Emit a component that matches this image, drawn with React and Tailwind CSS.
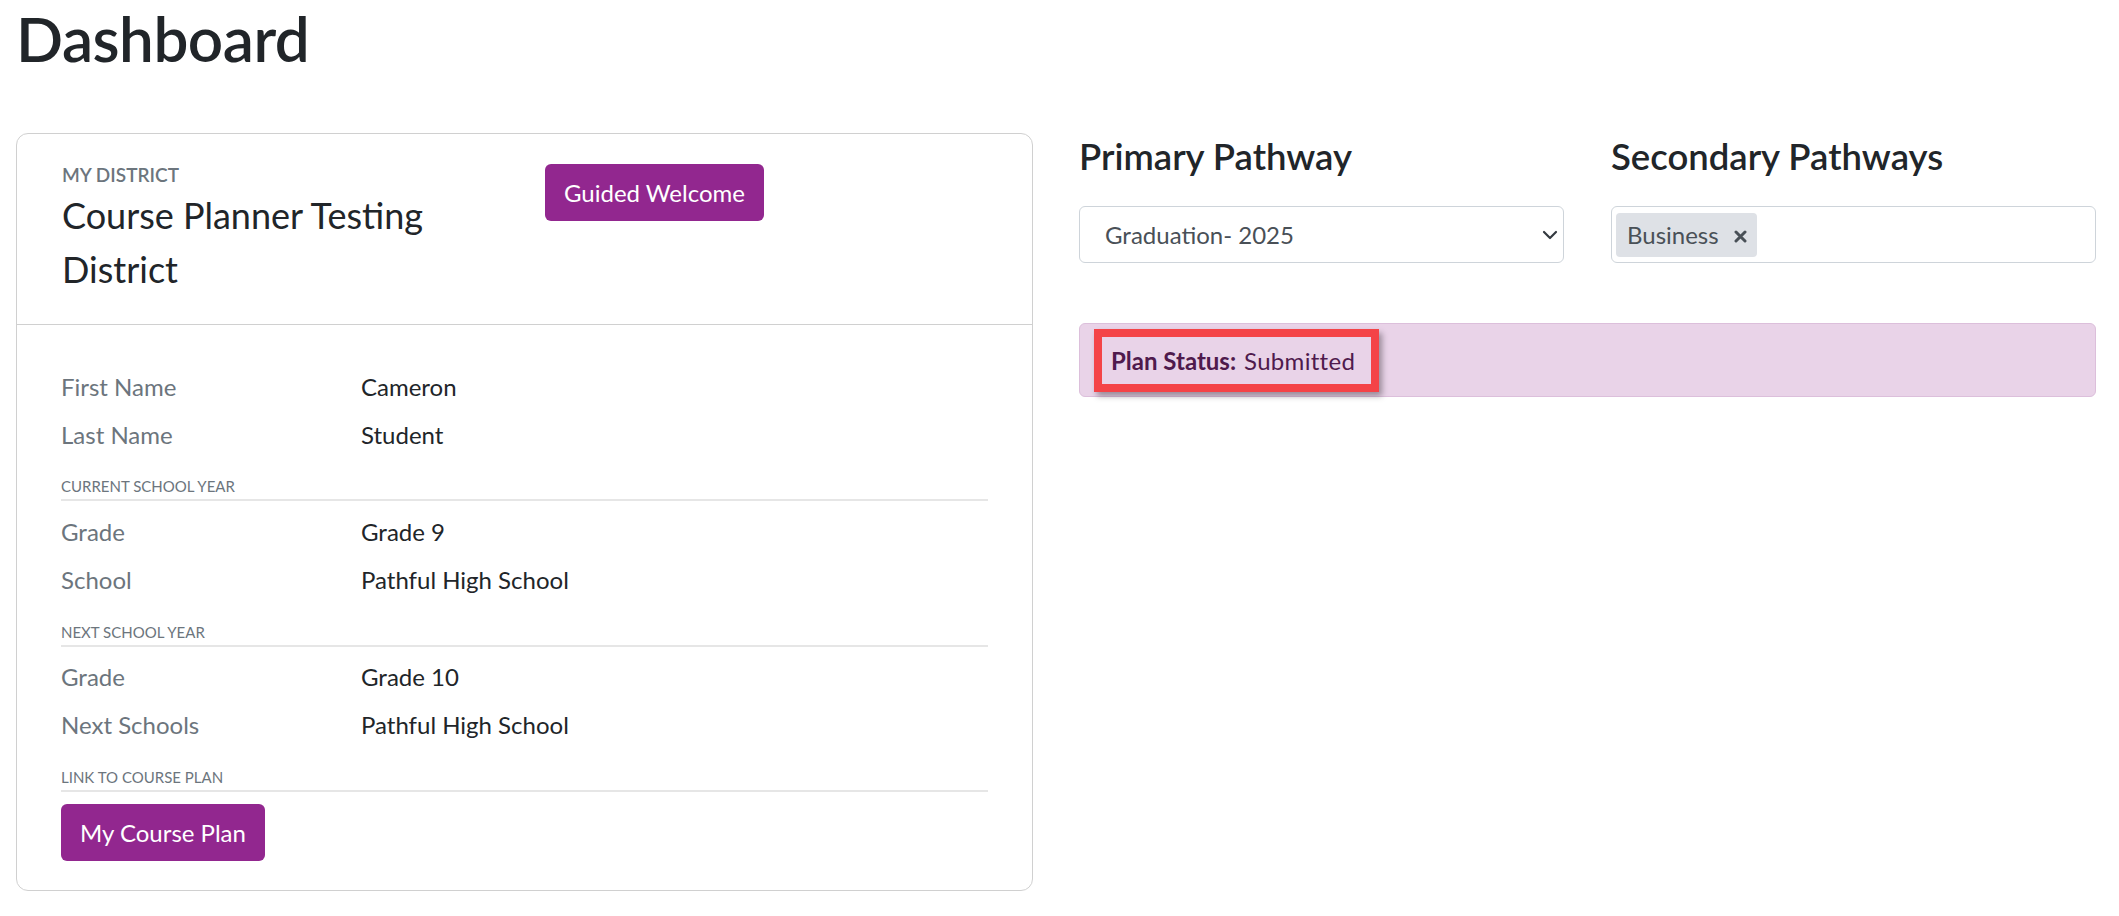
import { useState } from 'react'

const font = { fontFamily: 'Lato, "Noto Sans", sans-serif' }

function InfoRow({ label, value }) {
  return (
    <div className="grid grid-cols-[300px_1fr] h-[48px] items-center text-[24px]">
      <div className="text-[#6c757d]">{label}</div>
      <div className="text-[#212529]">{value}</div>
    </div>
  )
}

function SectionLabel({ children, className = '' }) {
  return (
    <div className={'text-[15px] leading-[20px] uppercase text-[#6c757d] pb-[3px] border-b-2 border-[#e6e6e6] ' + className}>
      {children}
    </div>
  )
}

function ChevronDown() {
  return (
    <svg width="16" height="10" viewBox="0 0 16 10" fill="none">
      <path d="M2 2l6 6 6-6" stroke="#343a40" strokeWidth="2.2" strokeLinecap="round" strokeLinejoin="round" />
    </svg>
  )
}

function XMark() {
  return (
    <svg width="13" height="13" viewBox="0 0 13 13" fill="none">
      <path d="M2 2l9 9M11 2l-9 9" stroke="#495057" strokeWidth="3" strokeLinecap="round" />
    </svg>
  )
}

export default function App() {
  const [pathway, setPathway] = useState('Graduation- 2025')
  const [secondary, setSecondary] = useState(['Business'])

  return (
    <div className="min-h-screen bg-white pl-[16px] pr-[23px] text-[#212529]" style={font}>
      <h1 className="pt-[2px] text-[62px] leading-[72px] font-semibold text-[#212529] tracking-[-0.5px]">Dashboard</h1>

      <div className="mt-[59px] grid grid-cols-2 gap-[46px] items-start">
        {/* student card */}
        <div className="border border-[#d0d0d0] rounded-[12px] bg-white">
          <div className="grid grid-cols-[483px_1fr] px-[45px] py-[28px] border-b border-[#d0d0d0]">
            <div>
              <div className="text-[19px] leading-[26px] uppercase text-[#6c757d] font-semibold">My District</div>
              <div className="w-[440px] text-[36px] leading-[54px] text-[#212529]">Course Planner Testing District</div>
            </div>
            <div>
              <button className="mt-[2px] h-[57px] px-[19px] rounded-[6px] bg-[#92278f] text-white text-[24px]">
                Guided Welcome
              </button>
            </div>
          </div>

          <div className="px-[44px] pt-[38px] pb-[29px]">
            <InfoRow label="First Name" value="Cameron" />
            <InfoRow label="Last Name" value="Student" />
            <SectionLabel className="mt-[17px]">Current School Year</SectionLabel>
            <div className="mt-[7px]">
              <InfoRow label="Grade" value="Grade 9" />
              <InfoRow label="School" value="Pathful High School" />
            </div>
            <SectionLabel className="mt-[18px]">Next School Year</SectionLabel>
            <div className="mt-[6px]">
              <InfoRow label="Grade" value="Grade 10" />
              <InfoRow label="Next Schools" value="Pathful High School" />
            </div>
            <SectionLabel className="mt-[18px]">Link to Course Plan</SectionLabel>
            <button className="mt-[12px] h-[57px] px-[19px] rounded-[6px] bg-[#92278f] text-white text-[24px]">
              My Course Plan
            </button>
          </div>
        </div>

        {/* pathways + plan status */}
        <div>
          <div className="grid grid-cols-2 gap-[47px]">
            <div>
              <h3 className="pt-[1px] text-[36.5px] leading-[45px] font-semibold text-[#212529]">Primary Pathway</h3>
              <div className="relative mt-[27px]">
                <select
                  value={pathway}
                  onChange={e => setPathway(e.target.value)}
                  className="appearance-none w-full h-[57px] pl-[25px] pr-[48px] border border-[#ced4da] rounded-[6px] bg-white text-[24px] text-[#495057] outline-none"
                  style={font}
                >
                  <option>Graduation- 2025</option>
                  <option>Graduation- 2026</option>
                </select>
                <div className="absolute right-[6px] top-[24px] pointer-events-none">
                  <ChevronDown />
                </div>
              </div>
            </div>
            <div>
              <h3 className="pt-[1px] text-[36.5px] leading-[45px] font-semibold text-[#212529]">Secondary Pathways</h3>
              <div className="mt-[27px] h-[57px] border border-[#ced4da] rounded-[6px] bg-white flex items-center gap-2 pl-[4px]">
                {secondary.map(s => (
                  <span key={s} className="h-[44px] flex items-center gap-[15px] pl-[11px] pr-[10px] rounded-[4px] bg-[#dee1e6] text-[24px] text-[#495057]">
                    {s}
                    <button onClick={() => setSecondary(secondary.filter(x => x !== s))} className="flex items-center mt-[3px]">
                      <XMark />
                    </button>
                  </span>
                ))}
              </div>
            </div>
          </div>

          <div className="mt-[60px] h-[74px] rounded-[6px] border border-[#dcbfdb] bg-[#e9d3e8] pl-[14px] pt-[5px]">
            <div className="inline-flex items-center h-[63px] pl-[9px] pr-[16px] border-[8px] border-[#f44347] shadow-[3px_4px_6px_rgba(0,0,0,0.35)] text-[24px] text-[#4f1a4d]">
              <span className="font-bold">Plan Status:</span>
              <span className="ml-[8px] tracking-[0.3px]">Submitted</span>
            </div>
          </div>
        </div>
      </div>
    </div>
  )
}
